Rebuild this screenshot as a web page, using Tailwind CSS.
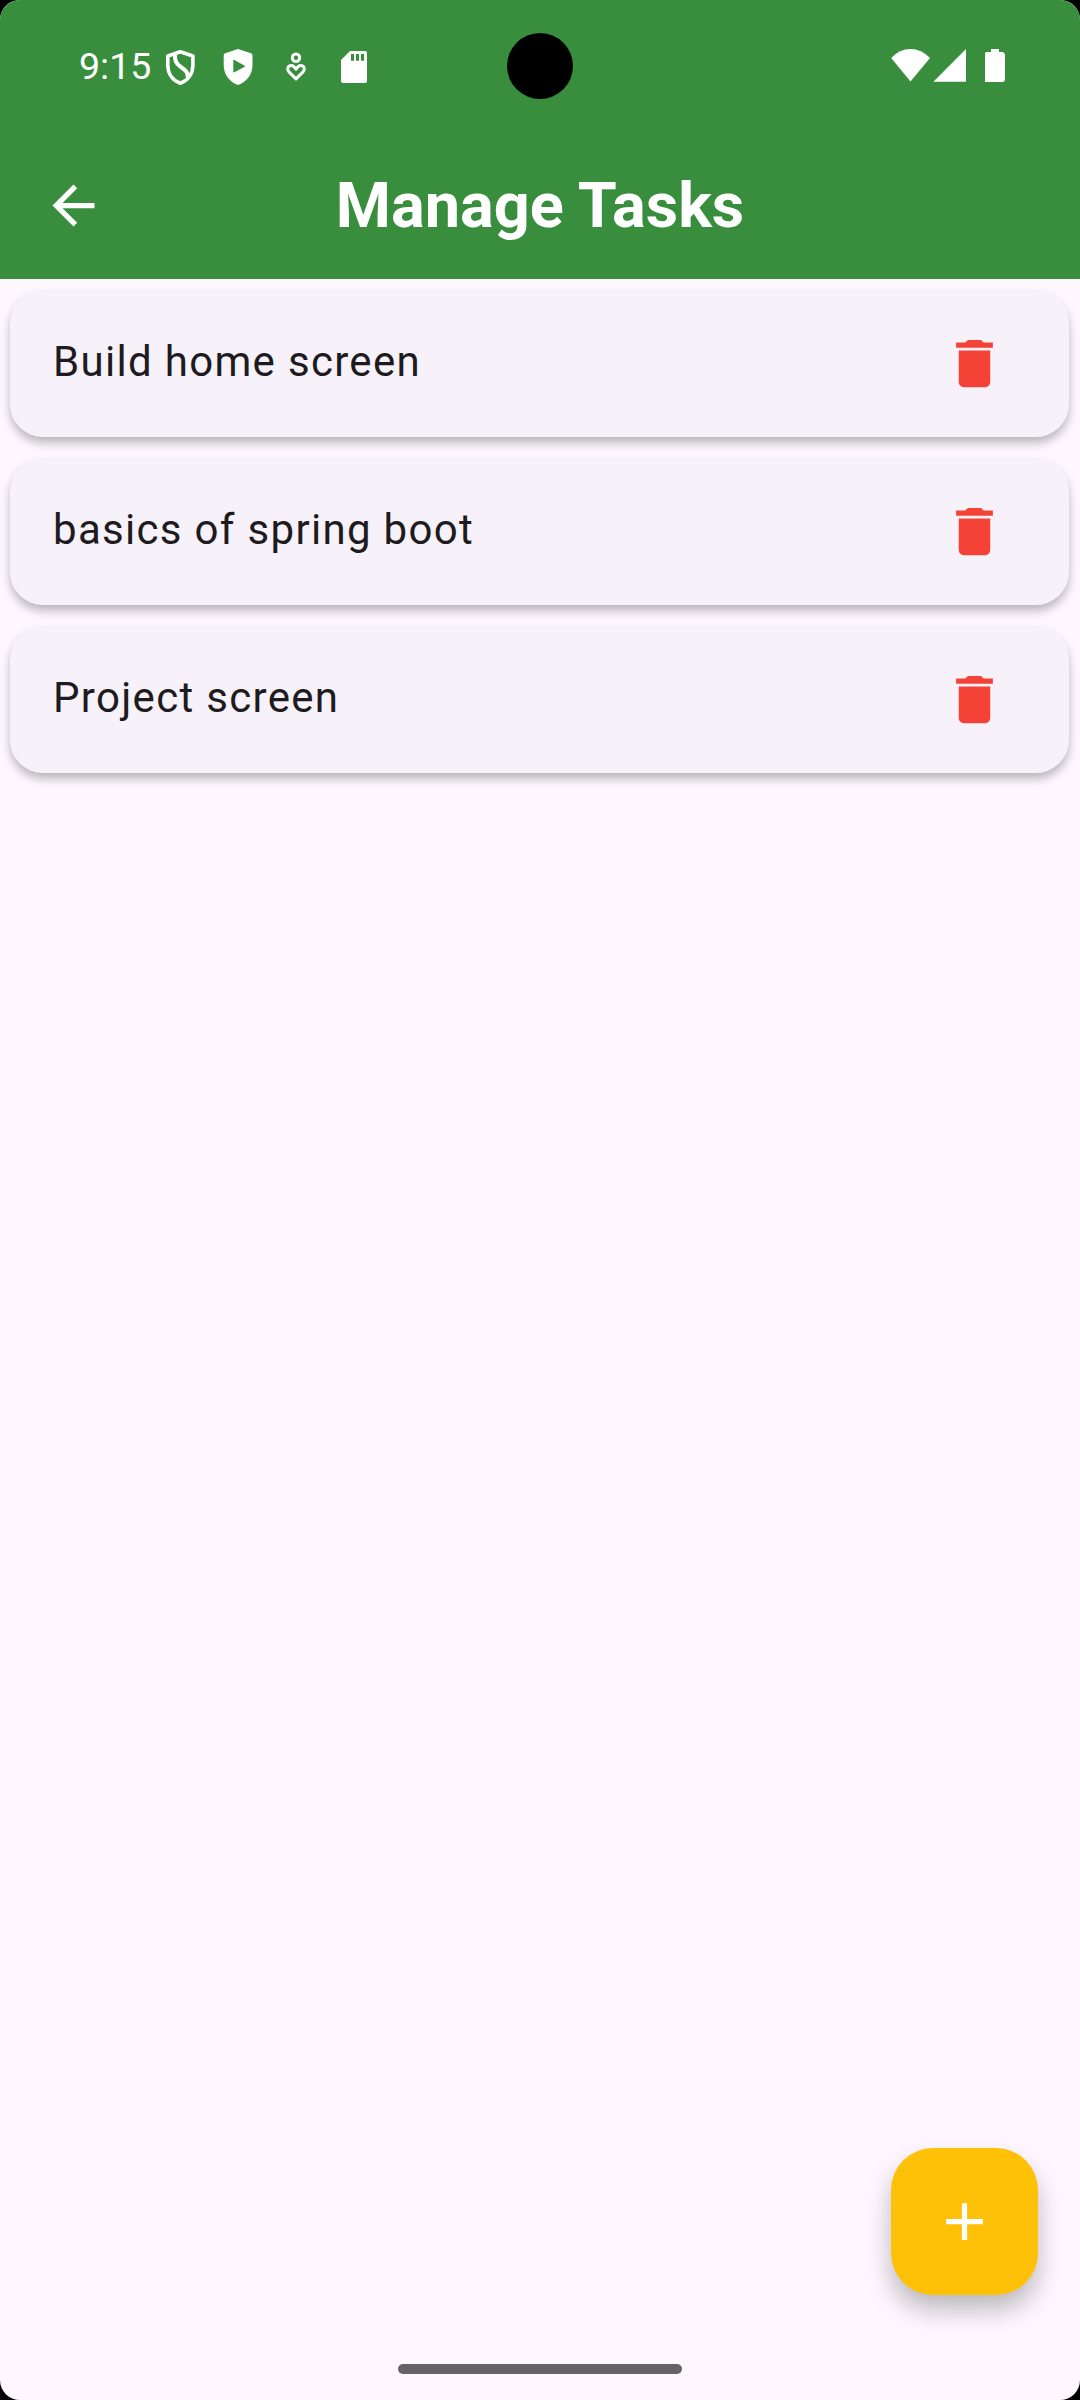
<!DOCTYPE html>
<html lang="en">
<head>
<meta charset="utf-8">
<title>Manage Tasks</title>
<script src="https://cdn.jsdelivr.net/npm/@tailwindcss/browser@4"></script>
</head>
<body class="bg-black font-['Roboto',sans-serif]">
<div class="relative flex h-[2400px] w-[1080px] flex-col overflow-hidden rounded-[20px] bg-[#fef7ff]">

  <header class="flex h-[279px] shrink-0 flex-col bg-[#388e3c] text-white">
    <!-- Status bar -->
    <div class="flex h-[132px] items-start pt-[44px]">
      <span class="ml-[79px] w-[84px] text-[37.5px] leading-[44px] whitespace-nowrap">9:15</span>
      <svg class="h-11 w-[34px]" viewBox="163 44 34 44" fill="none" stroke="#fff" stroke-width="3.600" stroke-linejoin="round">
        <path d="M180.300 51.800L167.800 56V65C167.800 73.500 172.500 80.500 180.300 83.200C188.200 80.500 192.900 73.500 192.900 65V56Z"/>
        <path d="M175.200 54.500C174.300 60 176 63.500 180 66.300C185.500 70 188.500 72.500 187.500 77.500" stroke-width="4"/>
      </svg>
      <svg class="ml-[24px] h-11 w-[34px]" viewBox="221 44 34 44" fill="#fff">
        <path fill-rule="evenodd" d="M238 49L251 53.300Q252.500 53.900 252.500 55.500V65C252.500 74.500 246.500 82 238 85C229.500 82 223.700 74.500 223.700 65V55.500Q223.700 53.900 225.200 53.300ZM233.300 60.600V71.600Q233.300 72.800 234.400 72.200L244.700 66.700Q245.300 66.200 244.700 65.700L234.400 60Q233.300 59.500 233.300 60.600Z"/>
      </svg>
      <svg class="ml-[24px] h-11 w-[34px]" viewBox="279 44 34 44" fill="none" stroke="#fff" stroke-width="3" stroke-linejoin="round">
        <circle cx="296" cy="57.700" r="3.700"/>
        <path d="M296 78.800L289.200 72.200C286.200 69 288.200 65.600 291.400 65.600C293.500 65.600 294.500 67 296 69.200C297.500 67 298.500 65.600 300.600 65.600C303.800 65.600 305.800 69 302.800 72.200Z"/>
      </svg>
      <svg class="ml-[24px] h-11 w-[34px]" viewBox="337 44 34 44" fill="#fff">
        <path fill-rule="evenodd" d="M350 51H365Q367 51 367 53V81Q367 83 365 83H343Q341 83 341 81V60ZM351 54V60.800H354V54ZM356 54V60.800H359V54ZM361 54V60.800H364V54Z"/>
      </svg>
      <svg class="ml-auto h-11 w-[120px]" viewBox="889 44 120 44" fill="#fff">
        <path d="M910.500 81.500L891.200 58Q899.500 49 910.500 49T930 58Z"/>
        <path d="M966 49V81.700H933.300Z"/>
        <path d="M991 49H999V52H1003L1005 54V80L1003.500 82H985V53L986 52H991Z"/>
      </svg>
      <div class="w-[71px]"></div>
    </div>
    <!-- App bar -->
    <div class="grid h-[147px] grid-cols-[147px_1fr_147px] items-center">
      <svg class="ml-[42px] size-[63px]" viewBox="0 0 24 24" fill="#fff"><path d="M20 11H7.830l5.590-5.590L12 4l-8 8 8 8 1.410-1.410L7.830 13H20z"/></svg>
      <h1 class="text-center text-[63px] leading-[74px] font-bold whitespace-nowrap">Manage Tasks</h1>
    </div>
  </header>

  <main class="flex flex-1 flex-col gap-[21px] pt-[11px] pr-[11px] pl-[10px]">
    <div class="flex h-[147px] items-center justify-between rounded-[33px] bg-[#f7f2fa] pr-[63px] pl-[43px] shadow-[0_6px_10px_rgba(0,0,0,0.26)]">
      <span class="pb-[5px] text-[42px] leading-[63px] tracking-[1.312px] text-[#1d1b20]">Build home screen</span>
      <svg class="size-[63px]" viewBox="0 0 24 24" fill="#f44336"><path d="M6 19c0 1.100.9 2 2 2h8c1.100 0 2-.9 2-2V7H6v12zM19 4h-3.500l-1-1h-5l-1 1H5v2h14V4z"/></svg>
    </div>
    <div class="flex h-[147px] items-center justify-between rounded-[33px] bg-[#f7f2fa] pr-[63px] pl-[43px] shadow-[0_6px_10px_rgba(0,0,0,0.26)]">
      <span class="pb-[5px] text-[42px] leading-[63px] tracking-[1.312px] text-[#1d1b20]">basics of spring boot</span>
      <svg class="size-[63px]" viewBox="0 0 24 24" fill="#f44336"><path d="M6 19c0 1.100.9 2 2 2h8c1.100 0 2-.9 2-2V7H6v12zM19 4h-3.500l-1-1h-5l-1 1H5v2h14V4z"/></svg>
    </div>
    <div class="flex h-[147px] items-center justify-between rounded-[33px] bg-[#f7f2fa] pr-[63px] pl-[43px] shadow-[0_6px_10px_rgba(0,0,0,0.26)]">
      <span class="pb-[5px] text-[42px] leading-[63px] tracking-[1.312px] text-[#1d1b20]">Project screen</span>
      <svg class="size-[63px]" viewBox="0 0 24 24" fill="#f44336"><path d="M6 19c0 1.100.9 2 2 2h8c1.100 0 2-.9 2-2V7H6v12zM19 4h-3.500l-1-1h-5l-1 1H5v2h14V4z"/></svg>
    </div>
  </main>

  <!-- Gesture bar -->
  <div class="flex h-9 shrink-0 justify-center">
    <div class="h-[10px] w-[284px] rounded-full bg-[#656366]"></div>
  </div>

  <!-- Camera cutout -->
  <div class="absolute top-[33px] left-[507px] size-[66px] rounded-full bg-black"></div>

  <!-- Floating action button -->
  <button class="absolute right-[42px] bottom-[105px] flex size-[147px] items-center justify-center rounded-[42px] bg-[#ffc107] shadow-[0_15px_26px_rgba(0,0,0,0.26)]" aria-label="Add task">
    <svg class="size-[63px]" viewBox="0 0 24 24" fill="#fff"><path d="M19 13h-6v6h-2v-6H5v-2h6V5h2v6h6z"/></svg>
  </button>
</div>
</body>
</html>
